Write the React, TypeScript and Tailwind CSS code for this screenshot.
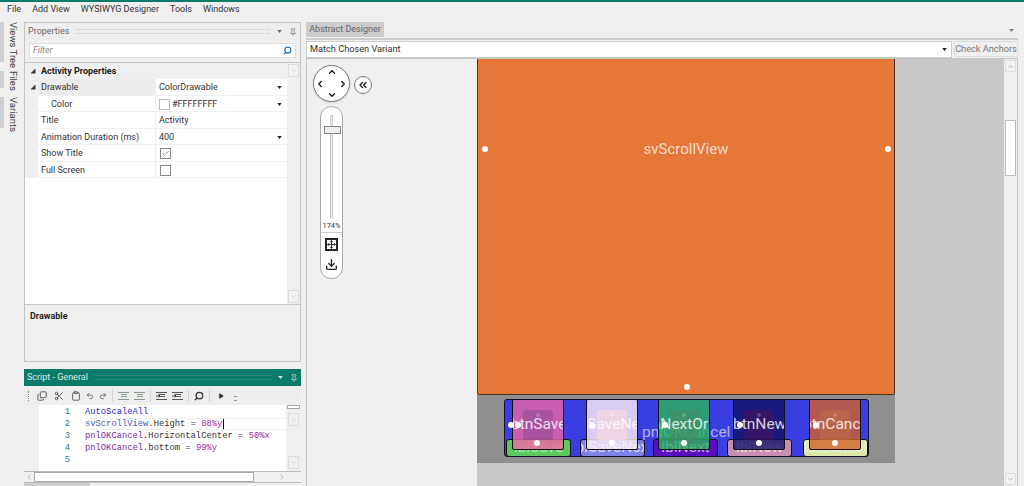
import React from "react";
import { Copy, Scissors, Clipboard, Undo2, Redo2, Search, Play, ChevronUp, ChevronDown, ChevronLeft, ChevronRight, ChevronsLeft, Check, Pin, Move, Download } from "lucide-react";

const Tri = ({ className = "" }: { className?: string }) => (
  <svg width="7" height="5" viewBox="0 0 7 5" className={className}><path d="M0.5 0.5h6L3.5 4.5z" fill="currentColor" /></svg>
);
const Corner = ({ className = "" }: { className?: string }) => (
  <svg width="6" height="6" viewBox="0 0 6 6" className={className}><path d="M5.5 0.5v5h-5z" fill="#333" /></svg>
);
const Lines = ({ color, arrow }: { color: string; arrow?: boolean }) => (
  <svg width="11" height="10" viewBox="0 0 11 10" className="shrink-0" stroke={color} strokeWidth="1" fill="none">
    <path d="M0 1.5h11M3 3.5h6M3 5.5h6M0 8.5h11" />
    {arrow && <path d="M0 5h4M2.5 3.5L4 5L2.5 6.5" stroke="#333" />}
  </svg>
);
const Sep = () => <span className="h-[13px] w-px shrink-0 bg-[#d4d4d4]" />;

function PanelHeader({ title, teal }: { title: string; teal?: boolean }) {
  return (
    <div className={`flex h-[17px] shrink-0 items-center gap-[6px] pl-[3px] pr-[3px] text-[9px] ${teal ? "bg-[#0b7a69] text-[#d7eee9]" : "bg-[#eeeeee] text-[#666666]"}`}>
      <span>{title}</span>
      <div className={`h-[5px] flex-1 border-y border-dotted ${teal ? "border-[#3d9a8a]" : "border-[#c4c4c4]"}`} />
      <Tri className={`scale-75 ${teal ? "text-[#d7eee9]" : "text-[#666666]"}`} />
      <Pin size={8} className={teal ? "text-[#d7eee9]" : "text-[#666666]"} />
    </div>
  );
}

function PropRow({ name, value, indent, expand, active, swatch, arrow, check }: { name: string; value?: string; indent?: boolean; expand?: boolean; active?: boolean; swatch?: boolean; arrow?: boolean; check?: "on" | "off" }) {
  return (
    <div className="flex h-[16.5px] items-stretch bg-white">
      <div className="flex w-[13px] items-center justify-center bg-[#f0f0f0]">{expand && <Corner className="ml-[2px]" />}</div>
      <div className={`flex w-[117px] items-center whitespace-nowrap border-b border-[#f0f0f0] pt-[2px] text-[#333333] ${indent ? "pl-[13px]" : "pl-[3px]"} ${active ? "bg-[#ececec]" : ""}`}>{name}</div>
      <div className="flex flex-1 items-center border-b border-l border-[#f0f0f0] pl-[3px] pr-[4px] pt-[2px] text-[#333333]">
        {swatch && <span className="mr-[2px] h-[11px] w-[11px] border border-[#bbbbbb] bg-white" />}
        {check && (
          <span className="ml-px flex h-[11px] w-[11px] items-center justify-center border border-[#888888] bg-white">
            {check === "on" && <Check size={9} className="text-[#777777]" />}
          </span>
        )}
        <span>{value}</span>
        {arrow && <Tri className="ml-auto scale-75 text-[#222222]" />}
      </div>
    </div>
  );
}

function VTab({ label, h }: { label: string; h: string }) {
  return (
    <div className={`flex ${h} items-start`}>
      <div className="h-full w-[4px] bg-[#cfcfcf]" />
      <span className="ml-[3px] whitespace-nowrap text-[9.5px] leading-[12px] text-[#444444] [writing-mode:vertical-rl]">{label}</span>
    </div>
  );
}

function ScrollV() {
  return (
    <div className="flex w-[13px] shrink-0 flex-col items-center justify-between bg-[#f0f0f0] py-px">
      <div className="flex h-[13px] w-[11px] items-center justify-center border border-[#dddddd] bg-[#f3f3f3] text-[#c0c0c0]"><ChevronUp size={7} /></div>
      <div className="flex h-[13px] w-[11px] items-center justify-center border border-[#dddddd] bg-[#f3f3f3] text-[#c0c0c0]"><ChevronDown size={7} /></div>
    </div>
  );
}

const code: React.ReactNode[] = [
  <span className="text-[#2a2ad0]">AutoScaleAll</span>,
  <><span className="text-[#4b62b0]">svScrollView</span><span>.Height = </span><span className="text-[#a0259c]">88%y</span><span className="ml-px inline-block h-[10px] w-px align-top bg-black" /></>,
  <><span className="text-[#7a2aa8]">pnlOKCancel</span><span>.HorizontalCenter = </span><span className="text-[#a0259c]">50%x</span></>,
  <><span className="text-[#7a2aa8]">pnlOKCancel</span><span>.bottom = </span><span className="text-[#a0259c]">99%y</span></>,
  <></>,
];

const Dot = ({ className }: { className: string }) => <span className={`absolute h-[6px] w-[6px] rounded-full bg-white ${className}`} />;

function Btn({ left, bg, inner, label, labelLeft }: { left: string; bg: string; inner: string; label: string; labelLeft: string }) {
  return (
    <div className={`absolute -top-px h-[51px] w-[52px] overflow-hidden rounded-[2px] border border-[#111111] ${left} ${bg}`}>
      <div className={`absolute left-[10px] top-[10px] h-[30px] w-[30px] rounded-[2px] ${inner}`} />
      <span className="absolute left-[23px] top-[13px] h-[4px] w-[4px] rounded-full bg-white/20" />
      <span className={`absolute top-[12px] whitespace-nowrap text-[15.5px] leading-[24px] text-white/80 ${labelLeft}`}>{label}</span>
    </div>
  );
}

function Lbl({ left, bg, label, text }: { left: string; bg: string; label: string; text: string }) {
  return (
    <div className={`absolute top-[39px] flex h-[18px] w-[65px] items-center justify-center overflow-hidden rounded-[3px] border border-[#111111] text-[15.5px] leading-none ${left} ${bg} ${text}`}>
      <span className="whitespace-nowrap">{label}</span>
    </div>
  );
}

export default function App() {
  return (
    <div className="flex h-[486px] w-[1024px] flex-col overflow-hidden border-t-2 border-[#0b7a69] bg-[#f0f0f0] font-['Roboto',sans-serif] text-[9px] leading-none text-[#333333]">
      <div className="flex h-[15px] shrink-0 items-center gap-[11px] pl-[7px] text-[9px] text-[#333333]">
        <span>File</span><span>Add View</span><span>WYSIWYG Designer</span><span>Tools</span><span>Windows</span>
      </div>
      <div className="flex min-h-0 flex-1 pt-[5px]">
        <div className="flex w-[24px] shrink-0 flex-col gap-[9px]">
          <VTab label="Views Tree" h="h-[40px]" />
          <VTab label="Files" h="h-[17px]" />
          <VTab label="Variants" h="h-[31px]" />
        </div>

        <div className="flex w-[277px] shrink-0 flex-col gap-[7px]">
          <div className="flex h-[340px] flex-col border border-[#c4c4c4] bg-[#f0f0f0]">
            <PanelHeader title="Properties" />
            <div className="mx-[4px] mt-[3px] flex h-[15px] shrink-0 items-center justify-between border border-[#dddddd] bg-white px-[3px] italic text-[#888888]">
              <span>Filter</span>
              <Search size={9} strokeWidth={3} className="-scale-x-100 text-[#1f6fb0]" />
            </div>
            <div className="mt-[4px] flex h-[243px] shrink-0 border-y border-[#c8c8c8] bg-white">
              <div className="flex-1">
                <div className="flex h-[16px] items-center bg-[#f0f0f0] font-bold text-[#222222]">
                  <div className="flex w-[13px] items-center justify-center"><Corner className="ml-[2px]" /></div>
                  <span className="pl-[3px]">Activity Properties</span>
                </div>
                <PropRow name="Drawable" value="ColorDrawable" expand active arrow />
                <PropRow name="Color" value="#FFFFFFFF" indent swatch arrow />
                <PropRow name="Title" value="Activity" />
                <PropRow name="Animation Duration (ms)" value="400" arrow />
                <PropRow name="Show Title" check="on" />
                <PropRow name="Full Screen" check="off" />
              </div>
              <ScrollV />
            </div>
            <div className="px-[5px] pt-[7px] font-bold text-[#222222]">Drawable</div>
          </div>

          <div className="flex min-h-0 flex-1 flex-col">
            <PanelHeader title="Script - General" teal />
            <div className="flex h-[19px] shrink-0 items-center gap-[5px] bg-[#eeeeee] pl-[4px] text-[#444444]">
              <span className="mr-[3px] h-[10px] w-px border-l border-dotted border-[#888888]" />
              <Copy size={10} className="-scale-y-100" /><Scissors size={10} className="ml-[2px]" /><Clipboard size={10} className="ml-[2px]" />
              <Undo2 size={8} /><Redo2 size={8} />
              <Sep />
              <Lines color="#8a9a8a" />
              <Lines color="#8a9a8a" />
              <Sep />
              <Lines color="#555555" arrow />
              <Lines color="#555555" arrow />
              <Sep />
              <Search size={10} strokeWidth={3} className="-scale-x-100 text-[#333333]" />
              <Sep />
              <Play size={6} fill="#333" className="ml-[3px]" />
              <span className="ml-[5px] mt-[5px] h-[5px] w-[2px] border-y border-dotted border-[#999999]" />
            </div>
            <div className="flex h-[66px] shrink-0 bg-white">
              <div className="w-[15px] bg-[#f0f0f0]" />
              <div className="w-[31px] pt-[1px] text-right font-['Liberation_Mono',monospace] text-[8.8px] leading-[12px] text-[#2b7a9a]">
                {[1, 2, 3, 4, 5].map((n) => <div key={n} className="h-[12px]">{n}</div>)}
              </div>
              <div className="ml-[15px] flex-1 pt-[1px] font-['Liberation_Mono',monospace] text-[8.8px] leading-[12px] text-[#333333]">
                {code.map((c, i) => <div key={i} className={`h-[12px] whitespace-pre ${i === 1 ? "border-y border-[#eeeeee] !leading-[10px]" : ""}`}>{c}</div>)}
              </div>
              <div className="flex w-[15px] flex-col items-center bg-[#f0f0f0]">
                <div className="h-[4px] w-[13px] border border-[#aaaaaa] bg-white" />
                <div className="mt-[4px] flex h-[13px] w-[11px] items-center justify-center border border-[#dddddd] text-[#c0c0c0]"><ChevronUp size={7} /></div>
                <div className="mt-auto mb-[2px] flex h-[13px] w-[11px] items-center justify-center border border-[#dddddd] text-[#c0c0c0]"><ChevronDown size={7} /></div>
              </div>
            </div>
            <div className="flex h-[12px] shrink-0 items-center gap-px border-y border-[#bbbbbb] bg-[#f0f0f0] px-px">
              <ChevronLeft size={8} className="text-[#999999]" />
              <div className="h-[10px] w-[220px] border border-[#aaaaaa] bg-white" />
              <ChevronRight size={8} className="ml-auto mr-[14px] text-[#999999]" />
            </div>
            <div className="h-[3px] w-[66px] bg-[#cccccc]" />
          </div>
        </div>

        <div className="ml-[5px] flex min-w-0 flex-1 flex-col pr-[6px]">
          <div className="flex h-[16px] shrink-0 items-start justify-between">
            <div className="flex h-[15px] w-[78px] items-center justify-center whitespace-nowrap bg-[#cccccc] text-[#666666]">Abstract Designer</div>
            <Tri className="mr-[3px] mt-[6px] scale-75 text-[#777777]" />
          </div>
          <div className="flex h-[20px] shrink-0 items-center gap-[2px] border-t-2 border-[#cccccc]">
            <div className="flex h-[17px] flex-1 items-center justify-between border border-[#cccccc] bg-white px-[3px] text-[9.2px] text-[#333333]">
              <span>Match Chosen Variant</span>
              <Tri className="scale-75 text-[#222222]" />
            </div>
            <div className="flex h-[16px] w-[64px] items-center justify-center whitespace-nowrap border border-[#dddddd] text-[9.2px] text-[#777777]">Check Anchors</div>
          </div>
          <div className="flex min-h-0 flex-1 border-x border-t border-[#c4c4c4]">
            <div className="relative min-w-0 flex-1 overflow-hidden bg-[#f0f0f0]">
              <div className="absolute left-[170px] right-0 top-0 h-full bg-[#c8c8c8]" />

              {/* navigator */}
              <div className="absolute left-[6px] top-[6px] flex h-[37px] w-[37px] items-center justify-center rounded-full border border-[#777777] bg-white shadow-sm">
                <ChevronUp size={10} strokeWidth={3} className="absolute top-px text-[#111111]" />
                <ChevronDown size={10} strokeWidth={3} className="absolute bottom-px text-[#111111]" />
                <ChevronLeft size={10} strokeWidth={3} className="absolute left-px text-[#111111]" />
                <ChevronRight size={10} strokeWidth={3} className="absolute right-px text-[#111111]" />
              </div>
              <div className="absolute left-[47px] top-[17px] flex h-[18px] w-[18px] items-center justify-center rounded-full border border-[#777777] bg-white">
                <ChevronsLeft size={12} strokeWidth={2.5} className="text-[#111111]" />
              </div>
              <div className="absolute left-[13px] top-[47px] flex h-[173px] w-[23px] flex-col items-center rounded-[11px] border border-[#aaaaaa] bg-white">
                <div className="relative mt-[8px] h-[103px] w-[3px] border border-[#cccccc] bg-[#eeeeee]">
                  <div className="absolute -left-[7px] top-[10px] h-[8px] w-[17px] border border-[#888888] bg-[#eeeeee]" />
                </div>
                <div className="mt-[4px] w-full border-b border-[#cccccc] pb-[2px] text-center text-[7.5px] text-[#333333]">174%</div>
                <div className="mt-[5px] flex h-[13px] w-[13px] items-center justify-center border-2 border-[#222222]">
                  <Move size={9} strokeWidth={2.5} className="text-[#222222]" />
                </div>
                <Download size={13} strokeWidth={2.5} className="mt-[7px] text-[#222222]" />
              </div>

              {/* designer canvas */}
              <div className="absolute left-[170px] top-0 flex h-[336px] w-[418px] items-center justify-center rounded-b-[2px] border-x border-b border-[#4a3020] bg-[#e57738]">
                <span className="-translate-y-[77px] text-[15px] text-white/75">svScrollView</span>
                <Dot className="left-[4px] top-[87px]" />
                <Dot className="right-[3px] top-[87px]" />
                <Dot className="left-[206px] bottom-[4px]" />
              </div>
              <div className="absolute left-[170px] top-[336px] h-[68px] w-[418px] bg-[#8f8f8f]" />
              <div className="absolute left-[197px] top-[340px] h-[58px] w-[365px] overflow-hidden rounded-[3px] border border-[#111133] bg-[#3a3de0]">
                <Lbl left="left-[1px]" bg="bg-[#5cc860]" label="lblSave" text="text-white/50" />
                <Lbl left="left-[75px]" bg="bg-[#7f80e8]" label="lblSaveNext" text="text-white/70" />
                <Lbl left="left-[148px]" bg="bg-[#5a10c0]" label="lblNext" text="text-white/70" />
                <Lbl left="left-[222px]" bg="bg-[#c890b0]" label="lblNew" text="text-white/70" />
                <Lbl left="left-[298px]" bg="bg-[#dde8a8]" label="lblCancel" text="text-white/50" />
                <span className="absolute left-[137px] top-[20px] whitespace-nowrap text-[15.5px] leading-[24px] text-white/60">pnlOKCancel</span>
                <Btn left="left-[7px]" bg="bg-[#ed65a3]/80" inner="bg-[#8a4a90]/50" label="btnSave" labelLeft="-left-[2px]" />
                <Btn left="left-[81px]" bg="bg-[#fff0f5]/80" inner="bg-[#f8d8e0]/70" label="btnSaveNext" labelLeft="-left-[22px]" />
                <Btn left="left-[153px]" bg="bg-[#2cb55b]/80" inner="bg-[#4a8a60]/50" label="btnNextOr" labelLeft="-left-[21px]" />
                <Btn left="left-[228px]" bg="bg-[#111165]/80" inner="bg-[#501050]/50" label="btnNew" labelLeft="-left-px" />
                <Btn left="left-[304px]" bg="bg-[#d16228]/80" inner="bg-[#c07048]/50" label="btnCancel" labelLeft="-left-[7px]" />
                <Dot className="left-[3px] top-[22px]" />
                <Dot className="left-[10px] top-[22px]" />
                <Dot className="left-[84px] top-[22px]" />
                <Dot className="left-[157px] top-[22px]" />
                <Dot className="left-[232px] top-[22px]" />
                <Dot className="left-[308px] top-[22px]" />
                <Dot className="left-[29px] top-[40px]" />
                <Dot className="left-[104px] top-[40px]" />
                <Dot className="left-[176px] top-[40px]" />
                <Dot className="left-[251px] top-[40px]" />
                <Dot className="left-[327px] top-[40px]" />
              </div>
            </div>
            <div className="flex w-[13px] shrink-0 flex-col items-center bg-[#f0f0f0] pb-px pt-[1px]">
              <div className="flex h-[12px] w-[11px] items-center justify-center border border-[#dddddd] bg-[#f3f3f3] text-[#aaaaaa]"><ChevronUp size={7} strokeWidth={3} /></div>
              <div className="mt-[48px] h-[56px] w-[11px] border border-[#bbbbbb] bg-white" />
              <div className="mt-auto flex h-[12px] w-[11px] items-center justify-center border border-[#dddddd] bg-[#f3f3f3] text-[#aaaaaa]"><ChevronDown size={7} strokeWidth={3} /></div>
            </div>
          </div>
        </div>
      </div>
    </div>
  );
}
